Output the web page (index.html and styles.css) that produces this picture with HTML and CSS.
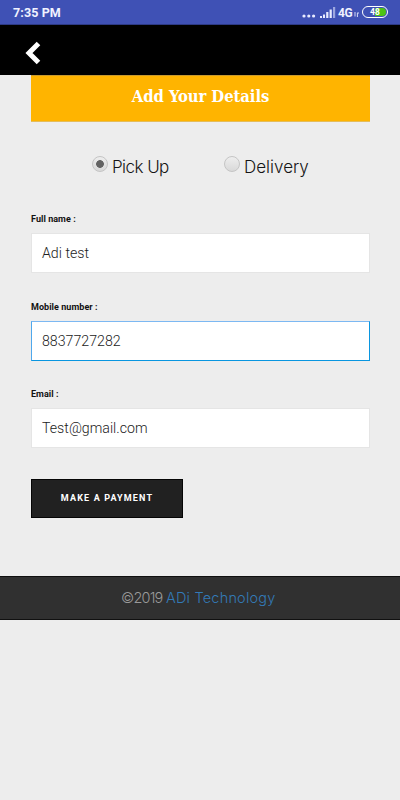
FILE: index.html
```html
<!DOCTYPE html>
<html lang="en">
<head>
<meta charset="utf-8">
<meta name="viewport" content="width=device-width">
<title>Add Your Details</title>
<link rel="stylesheet" href="styles.css">
</head>
<body>
<div class="status">
  <span class="time">7:35 PM</span>
  <div class="indicators">
    <svg class="dots" width="14" height="4" viewBox="0 0 14 4"><circle cx="2" cy="2" r="1.6"/><circle cx="6.8" cy="2" r="1.6"/><circle cx="11.6" cy="2" r="1.6"/></svg>
    <svg class="signal" width="16" height="11" viewBox="0 0 16 11"><path d="M0 11V9H2V11ZM3 11V7.500H5V11ZM6.200 11V5H8.400V11ZM9.600 11V2.500H11.800V11Z"/><path class="weak" d="M13 11V0H15.200V11Z"/></svg>
    <span class="network">4G</span>
    <svg class="data" width="5" height="5" viewBox="0 0 5 5"><path d="M1 0V4.500M3.400 5V.8M3.400 1H5"/></svg>
    <div class="battery"><span class="level">48</span></div>
  </div>
</div>
<header class="navbar">
  <svg width="16" height="24" viewBox="0 0 16 24"><path d="M13.500 2.500L4 12L13.500 21.500"/></svg>
</header>
<main class="content">
  <h1 class="banner"><span>Add Your Details</span></h1>
  <div class="choices">
    <label class="choice pickup"><span class="radio checked"></span><span class="choice-text">Pick Up</span></label>
    <label class="choice delivery"><span class="radio"></span><span class="choice-text">Delivery</span></label>
  </div>
  <div class="field"><div class="label">Full name :</div><div class="input">Adi test</div></div>
  <div class="field mobile"><div class="label">Mobile number :</div><div class="input focused">8837727282</div></div>
  <div class="field email"><div class="label">Email :</div><div class="input">Test@gmail.com</div></div>
  <div class="pay">MAKE A PAYMENT</div>
</main>
<footer class="footer"><span class="year">©2019</span><span class="company">ADi Technology</span></footer>
</body>
</html>
```
FILE: styles.css
```css
* { box-sizing: border-box; }
body { margin: 0; width: 400px; height: 800px; overflow: hidden; background: #ededed; color: #111; font-family: Roboto, sans-serif; }
.status { height: 25px; background: #3f51b5; border-bottom: 1px solid #2d3a85; display: flex; justify-content: space-between; padding: 0 13px; color: #f0f2ff; }
.time { font-size: 12.5px; font-weight: 700; line-height: 26px; letter-spacing: .1px; }
.indicators { display: flex; align-items: flex-start; margin-right: -1px; }
.indicators svg { fill: #e8ebff; }
.indicators .dots { margin: 14px 4px 0 0; }
.indicators .signal { margin: 7px 2px 0 0; }
.indicators .weak { fill: #9ca6df; }
.network { width: 15px; font-size: 12px; font-weight: 700; line-height: 26px; letter-spacing: -.4px; }
.indicators .data { fill: none; stroke: #d5daf7; stroke-width: 1; margin: 12px 3px 0 1px; }
.battery { width: 26px; height: 12px; margin-top: 6px; border: 1px solid #fff; border-radius: 6px; padding: 1px; }
.level { display: block; height: 8px; border-radius: 4px; background: linear-gradient(to right, #3f51b5 48%, #4cc313 48%); font-size: 8.500px; font-weight: 700; line-height: 9px; text-align: center; color: #fff; }
.navbar { height: 50px; background: #000; padding: 16px 0 0 25px; }
.navbar svg { display: block; fill: none; stroke: #fff; stroke-width: 5; }
.content { padding: 0 30px; height: 501px; }
.banner { margin: 0 0 0 1px; width: 339px; height: 47px; background: #ffb400; border-top: 1px solid #c99a2d; border-bottom: 1px solid #e5bd5a; color: #fff; text-align: center; font: 700 16.500px/41px "DejaVu Serif Condensed", "DejaVu Serif", serif; font-stretch: condensed; letter-spacing: -.08px; }
.choices { display: flex; padding: 34px 0 0 62px; height: 90px; }
.choice { display: flex; font-size: 17px; line-height: 22px; color: #151515; }
.choice-text { font-family: Inter, sans-serif; font-weight: 300; letter-spacing: -.55px; }
.delivery .choice-text { letter-spacing: 0; }
.pickup { width: 132px; }
.radio { width: 16px; height: 16px; margin: 0 4px 0 0; border: 1px solid #c5c5c5; border-radius: 50%; background: linear-gradient(#eee, #d9d9d9); flex: none; }
.checked { background: radial-gradient(circle, #636363 0 3.500px, transparent 4.200px), linear-gradient(#eee, #d9d9d9); }
.field { height: 88px; }
.mobile { height: 87px; }
.email { height: 92px; }
.label { height: 21px; padding-left: 1px; font-size: 9px; font-weight: 700; line-height: 14px; letter-spacing: .05px; }
.input { height: 40px; margin-left: 1px; width: 339px; background: #fff; border: 1px solid #e5e5e5; padding-left: 10px; font-size: 14.200px; font-weight: 300; line-height: 38px; color: #222; }
.focused { border-color: #7cb8f2 #0996e0 #0996e0 #4fa8ec; }
.pay { width: 152px; height: 39px; margin-left: 1px; background: #212121; border: 1px solid #050505; color: #fff; text-align: center; font-size: 9px; line-height: 37px; font-weight: 700; letter-spacing: 1.150px; }
.footer { height: 44px; background: #303030; border-top: 1px solid #101010; border-bottom: 1px solid #101010; padding-left: 121px; display: flex; gap: 4px; font: 300 14.500px/42px Inter, sans-serif; color: #999; }
.year { width: 41px; letter-spacing: -.8px; }
.company { color: #337ab7; letter-spacing: .2px; }
```
